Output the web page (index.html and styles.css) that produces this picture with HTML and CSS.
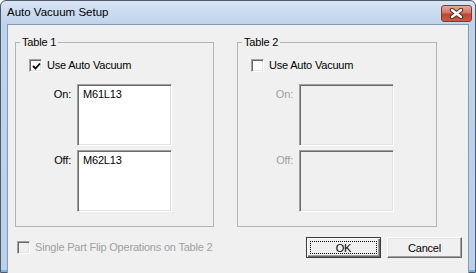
FILE: index.html
```html
<!DOCTYPE html>
<html lang="en">
<head>
    <meta charset="UTF-8">
    <meta name="viewport" content="width=device-width, initial-scale=1.0">
    <title>Auto Vacuum Setup</title>
    <link rel="stylesheet" href="styles.css">
</head>
<body>

<div class="window">
    <div class="titlebar">
        <span class="title">Auto Vacuum Setup</span>
        <span class="close">
            <svg width="15" height="11" viewBox="0 0 15 11">
                <path d="M3 2 L12 9 M12 2 L3 9" stroke="#5a2a24" stroke-width="4.4" stroke-linecap="round"/>
                <path d="M3 2 L12 9 M12 2 L3 9" stroke="#ffffff" stroke-width="2.4" stroke-linecap="round"/>
            </svg>
        </span>
    </div>

    <div class="client">
        <div class="groups">
            <!-- Table 1 -->
            <fieldset class="group">
                <legend>Table 1</legend>
                <div class="group-body">
                    <label class="check">
                        <span class="box checked">
                            <svg width="9" height="9" viewBox="0 0 9 9">
                                <path d="M1 4 L3.5 6.5 L8 1.5" fill="none" stroke="#000" stroke-width="1.8"/>
                            </svg>
                        </span>
                        Use Auto Vacuum
                    </label>
                    <div class="fields">
                        <span class="field-label">On:</span>
                        <div class="textbox">M61L13</div>
                        <span class="field-label">Off:</span>
                        <div class="textbox">M62L13</div>
                    </div>
                </div>
            </fieldset>

            <!-- Table 2 -->
            <fieldset class="group wide">
                <legend>Table 2</legend>
                <div class="group-body">
                    <label class="check">
                        <span class="box"></span>
                        Use Auto Vacuum
                    </label>
                    <div class="fields disabled">
                        <span class="field-label">On:</span>
                        <div class="textbox"></div>
                        <span class="field-label">Off:</span>
                        <div class="textbox"></div>
                    </div>
                </div>
            </fieldset>
        </div>

        <div class="footer">
            <label class="check disabled">
                <span class="box"></span>
                Single Part Flip Operations on Table 2
            </label>
            <div class="buttons">
                <button class="btn default"><span class="focus">OK</span></button>
                <button class="btn">Cancel</button>
            </div>
        </div>
    </div>
</div>

</body>
</html>
```

FILE: styles.css
```css
body {
    margin: 0;
    font-family: "Liberation Sans", Arial, sans-serif;
    font-size: 11px;
    letter-spacing: -0.2px;
    color: #000;
    background: #fff;
}

.window {
    width: 476px;
    height: 273px;
    box-sizing: border-box;
    border: 1px solid #4f5b6b;
    border-radius: 6px 6px 0 0;
    background: linear-gradient(to bottom, #d7e4f4 0px, #bfd3ec 24px, #bad0eb 100%);
    box-shadow: inset 0 -2px 0 #7fb3dd;
    padding: 0 6px 5px;
}

.titlebar {
    height: 23px;
    display: flex;
    align-items: flex-start;
    justify-content: space-between;
    margin: 0 -3px 0 0;
}

.title {
    font-size: 11.5px;
    letter-spacing: 0;
    padding: 5px 0 0 0;
}

.close {
    width: 31px;
    height: 17px;
    margin-top: 4px;
    box-sizing: border-box;
    border: 1px solid #7b3a33;
    border-radius: 3px;
    background: linear-gradient(to bottom, #e8a999 0%, #d27565 45%, #c0442f 55%, #cf5a40 100%);
    display: flex;
    align-items: center;
    justify-content: center;
}

.client {
    height: 241px;
    border: 1px solid #8499b5;
    background: #f0f0f0;
    padding: 11px 6px 8px 7px;
}

.groups {
    display: flex;
    gap: 23px;
}

.group {
    margin: 0;
    padding: 0 0 14px 0;
    width: 199px;
    box-sizing: border-box;
    border: 1px solid #b4b4b4;
    border-radius: 0;
    min-width: 0;
}

.group.wide {
    width: 200px;
}

.group legend {
    margin-left: 4px;
    padding: 0 2px;
    line-height: 13px;
}

.group-body {
    padding: 10px 0 0 13px;
}

.check {
    display: flex;
    align-items: center;
    gap: 5px;
    line-height: 13px;
}

.check.disabled {
    color: #a0a0a0;
}

.box {
    width: 13px;
    height: 13px;
    box-sizing: border-box;
    border: 1px solid;
    border-color: #a0a0a0 #ffffff #ffffff #a0a0a0;
    box-shadow: inset 1px 1px 0 #696969, inset -1px -1px 0 #e3e3e3;
    background: #fff;
    display: flex;
    align-items: center;
    justify-content: center;
    padding: 1px 0 0 1px;
}

.check.disabled .box {
    background: #f0f0f0;
}

.fields {
    display: grid;
    grid-template-columns: 42px 95px;
    column-gap: 6px;
    row-gap: 4px;
    margin-top: 12px;
}

.field-label {
    text-align: right;
    padding-top: 4px;
}

.textbox {
    height: 62px;
    box-sizing: border-box;
    border: 1px solid;
    border-color: #a0a0a0 #ffffff #ffffff #a0a0a0;
    box-shadow: inset 1px 1px 0 #696969, inset -1px -1px 0 #e3e3e3;
    background: #fff;
    padding: 3px 5px;
}

.fields.disabled .field-label {
    color: #a0a0a0;
}

.fields.disabled .textbox {
    background: #f0f0f0;
}

.footer {
    display: flex;
    align-items: center;
    justify-content: space-between;
    margin-top: 10px;
    padding-left: 2px;
}

.buttons {
    display: flex;
    gap: 6px;
}

.btn {
    width: 75px;
    height: 21px;
    box-sizing: border-box;
    font: inherit;
    letter-spacing: inherit;
    color: #000;
    background: #f0f0f0;
    border: 1px solid;
    border-color: #ffffff #696969 #696969 #ffffff;
    box-shadow: inset -1px -1px 0 #a0a0a0, inset 1px 1px 0 #e3e3e3;
    padding: 0;
}

.btn.default {
    border: 1px solid #3c3c3c;
    box-shadow: inset 1px 1px 0 #ffffff, inset -1px -1px 0 #696969, inset -2px -2px 0 #a0a0a0;
    padding: 3px;
}

.focus {
    display: flex;
    align-items: center;
    justify-content: center;
    height: 100%;
    box-sizing: border-box;
    border: 1px dotted #000;
}
```
